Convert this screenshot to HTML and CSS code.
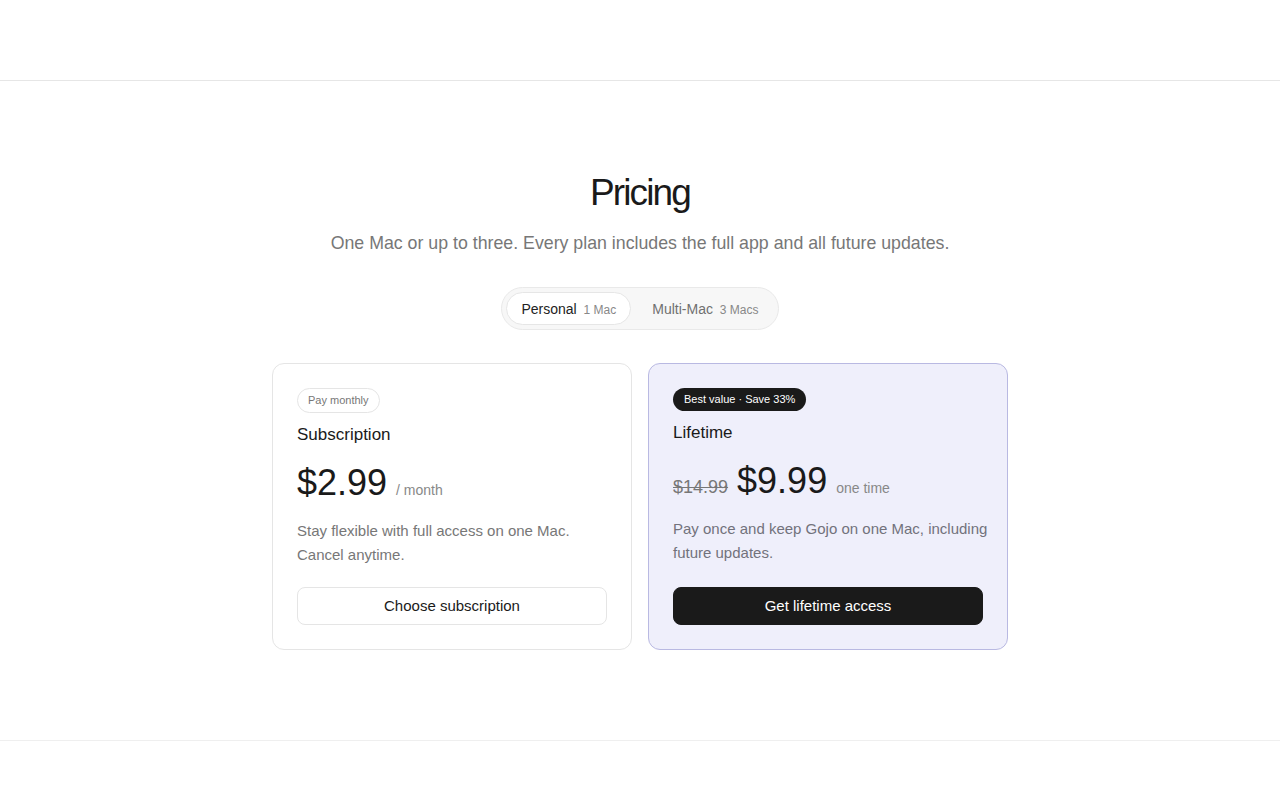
FILE: index.html
```html
<!DOCTYPE html>
<html lang="en">
<head>
  <meta charset="UTF-8" />
  <meta name="viewport" content="width=device-width, initial-scale=1" />
  <title>Pricing</title>
  <link rel="stylesheet" href="styles.css">
</head>
<body>

  <!-- HEADER -->
  <header class="site-header"></header>

  <main class="pricing">
    <h1>Pricing</h1>
    <p class="lead">One Mac or up to three. Every plan includes the full app and all future updates.</p>

    <div class="toggle" role="tablist">
      <button class="toggle-item active" role="tab">Personal <span>1 Mac</span></button>
      <button class="toggle-item" role="tab">Multi-Mac <span>3 Macs</span></button>
    </div>

    <div class="plans">
      <div class="plan">
        <span class="tag">Pay monthly</span>
        <h2>Subscription</h2>
        <div class="price">
          <strong>$2.99</strong>
          <span class="unit">/ month</span>
        </div>
        <p class="desc">Stay flexible with full access on one Mac. Cancel anytime.</p>
        <a href="#" class="btn">Choose subscription</a>
      </div>

      <div class="plan featured">
        <span class="tag dark">Best value · Save 33%</span>
        <h2>Lifetime</h2>
        <div class="price">
          <s>$14.99</s>
          <strong>$9.99</strong>
          <span class="unit">one time</span>
        </div>
        <p class="desc">Pay once and keep Gojo on one Mac, including future updates.</p>
        <a href="#" class="btn dark">Get lifetime access</a>
      </div>
    </div>
  </main>

  <footer class="site-footer"></footer>

</body>
</html>
```

FILE: styles.css
```css
/* Reset and base */
* {
  box-sizing: border-box;
  margin: 0;
  padding: 0;
}

body {
  font-family: 'Liberation Sans', Arial, sans-serif;
  background: #fff;
  color: #1a1a1a;
  min-height: 100vh;
}

/* Header / footer bars */
.site-header {
  height: 81px;
  border-bottom: 1px solid #e6e6e6;
}

.site-footer {
  height: 60px;
  border-top: 1px solid #efefef;
}

/* Pricing section */
.pricing {
  display: flex;
  flex-direction: column;
  align-items: center;
  padding-top: 90px;
  height: 659px;
}

h1 {
  font-weight: 400;
  font-size: 37px;
  line-height: 44px;
  letter-spacing: -0.05em;
  color: #1a1a1a;
}

.lead {
  margin-top: 16px;
  font-size: 17.75px;
  line-height: 24px;
  color: #777;
}

/* Personal / Multi-Mac switch */
.toggle {
  display: flex;
  gap: 6px;
  margin-top: 32px;
  padding: 4px;
  background: #f7f7f7;
  border: 1px solid #e9e9e9;
  border-radius: 999px;
}

.toggle-item {
  font-family: inherit;
  font-size: 14px;
  height: 33px;
  padding: 0 14px;
  border: 1px solid transparent;
  border-radius: 999px;
  background: none;
  color: #707070;
  cursor: pointer;
}

.toggle-item span {
  font-size: 12px;
  margin-left: 3px;
  color: #888;
}

.toggle-item.active {
  background: #fff;
  border-color: #e6e6e6;
  color: #222;
}

/* Plan cards */
.plans {
  display: grid;
  grid-template-columns: 360px 360px;
  gap: 16px;
  margin-top: 33px;
}

.plan {
  display: flex;
  flex-direction: column;
  align-items: flex-start;
  padding: 24px;
  border: 1px solid #e5e5e5;
  border-radius: 12px;
  background: #fff;
}

.plan.featured {
  background: #efeffb;
  border-color: #b9b9e2;
}

.tag {
  font-size: 11px;
  line-height: 23px;
  padding: 0 10px;
  border: 1px solid #e5e5e5;
  border-radius: 999px;
  color: #777;
}

.tag.dark {
  padding: 0 11px;
  background: #1a1a1a;
  border: none;
  color: #fff;
}

h2 {
  margin-top: 11px;
  font-size: 17px;
  font-weight: 400;
  line-height: 22px;
  color: #1a1a1a;
}

.price {
  display: flex;
  align-items: baseline;
  gap: 9px;
  margin-top: 15px;
}

.price strong {
  font-weight: 400;
  font-size: 36px;
  line-height: 44px;
  color: #1a1a1a;
}

.price s {
  font-size: 18px;
  color: #777;
}

.price .unit {
  font-size: 14px;
  color: #888;
}

.desc {
  margin: 14px 0 20px;
  font-size: 15px;
  line-height: 24px;
  color: #777;
}

.featured .desc {
  margin-right: -6px;
  color: #72727c;
}

.btn {
  display: block;
  align-self: stretch;
  margin-top: auto;
  height: 38px;
  line-height: 36px;
  text-align: center;
  font-size: 15px;
  color: #1a1a1a;
  text-decoration: none;
  border: 1px solid #e5e5e5;
  border-radius: 8px;
  background: #fff;
}

.btn.dark {
  background: #1a1a1a;
  border-color: #1a1a1a;
  color: #fff;
}
```
